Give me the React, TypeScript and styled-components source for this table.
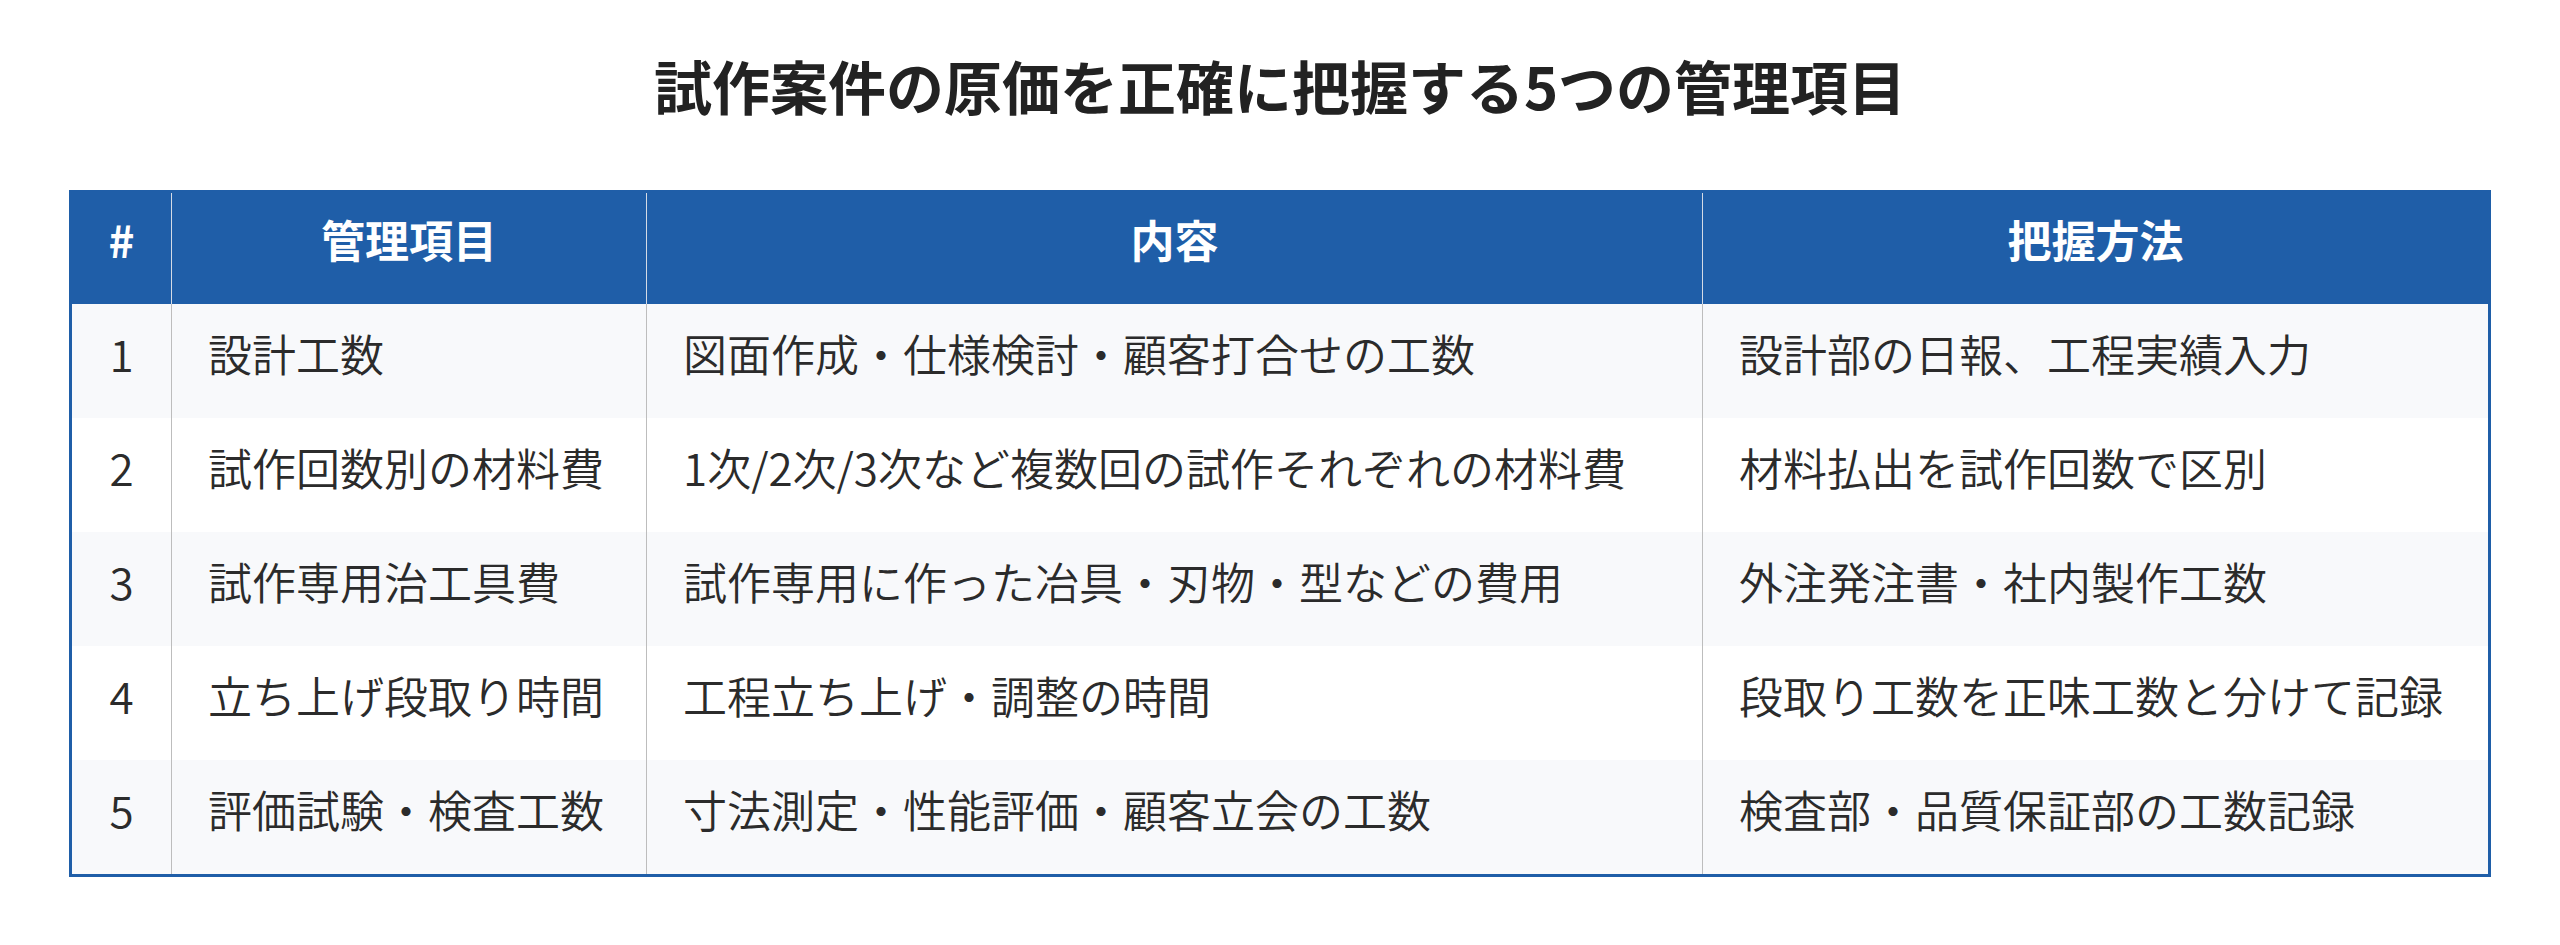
import styled, { createGlobalStyle } from 'styled-components';

const GlobalStyle = createGlobalStyle`
	* {
		box-sizing: border-box;
	}
	body {
		margin: 0;
		background: #ffffff;
		font-family: 'Noto Sans CJK JP', 'Noto Sans', sans-serif;
		color: #333333;
	}
`;

const BLUE = '#1f5ea8';
const LINE = '#bdbdbd';

const Page = styled.div`
	padding: 42px 0 60px;
`;

const Title = styled.h2`
	margin: 0 0 61px;
	text-align: center;
	font-size: 58px;
	line-height: 87px;
	font-weight: 700;
	color: #222222;
`;

const Table = styled.table`
	width: 2422px;
	margin: 0 auto;
	table-layout: fixed;
	border-collapse: separate;
	border-spacing: 0;
	border: 3px solid ${BLUE};
`;

const HeadCell = styled.th<{ $width: number }>`
	width: ${({ $width }) => $width}px;
	height: 111px;
	padding: 13px 20px 32px;
	background: ${BLUE};
	color: #ffffff;
	font-size: 44px;
	line-height: 66px;
	font-weight: 700;
	text-align: center;
	& + & {
		border-left: 1px solid #d4dbe6;
	}
`;

const Row = styled.tr<{ $shaded: boolean }>`
	background: ${({ $shaded }) => ($shaded ? '#f8f9fb' : '#ffffff')};
`;

const Cell = styled.td<{ $center?: boolean }>`
	height: 114px;
	padding: 16px 36px 32px;
	font-size: 44px;
	line-height: 66px;
	font-weight: 350;
	color: #2b2b2b;
	white-space: nowrap;
	text-align: ${({ $center }) => ($center ? 'center' : 'left')};
	& + & {
		border-left: 1px solid ${LINE};
	}
`;

const columns = [
	{ label: '#', width: 99 },
	{ label: '管理項目', width: 475 },
	{ label: '内容', width: 1056 },
	{ label: '把握方法', width: 786 },
];

const rows = [
	['1', '設計工数', '図面作成・仕様検討・顧客打合せの工数', '設計部の日報、工程実績入力'],
	['2', '試作回数別の材料費', '1次/2次/3次など複数回の試作それぞれの材料費', '材料払出を試作回数で区別'],
	['3', '試作専用治工具費', '試作専用に作った冶具・刃物・型などの費用', '外注発注書・社内製作工数'],
	['4', '立ち上げ段取り時間', '工程立ち上げ・調整の時間', '段取り工数を正味工数と分けて記録'],
	['5', '評価試験・検査工数', '寸法測定・性能評価・顧客立会の工数', '検査部・品質保証部の工数記録'],
];

export default function App() {
	return (
		<Page>
			<GlobalStyle />
			<Title>試作案件の原価を正確に把握する5つの管理項目</Title>
			<Table>
				<thead>
					<tr>
						{columns.map((col) => (
							<HeadCell key={col.label} $width={col.width}>
								{col.label}
							</HeadCell>
						))}
					</tr>
				</thead>
				<tbody>
					{rows.map((row, i) => (
						<Row key={row[0]} $shaded={i % 2 === 0}>
							{row.map((text, j) => (
								<Cell key={j} $center={j === 0}>
									{text}
								</Cell>
							))}
						</Row>
					))}
				</tbody>
			</Table>
		</Page>
	);
}
